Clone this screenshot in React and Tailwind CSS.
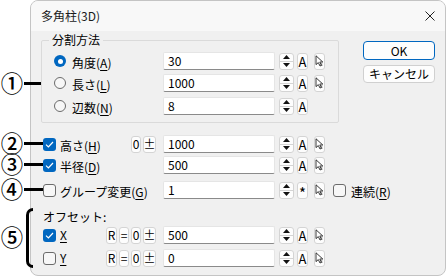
import React from "react"

function Small({ className = "", children }) {
  return (
    <div className={`h-[17px] flex items-center justify-center rounded-[3px] border border-[#d4d4d4] bg-[#fdfdfd] text-[12px] leading-none text-black ${className}`}>
      {children}
    </div>
  )
}

function Field({ value }) {
  return (
    <div className="w-[112px] h-[18px] shrink-0 bg-white border border-[#e5e5e5] border-b-[#8a8a8a] rounded-[2px] pl-[4px] flex items-center text-[12px] text-black">
      {value}
    </div>
  )
}

function Spin() {
  return (
    <div className="ml-[4px] w-[15px] h-[17px] flex flex-col rounded-[3px] border border-[#d4d4d4] bg-[#fdfdfd] overflow-hidden">
      <div className="flex-1 flex items-center justify-center border-b border-[#d4d4d4]">
        <svg width="7" height="4" viewBox="0 0 7 4"><path d="M0 4 L3.5 0 L7 4 Z" fill="#111" /></svg>
      </div>
      <div className="flex-1 flex items-center justify-center">
        <svg width="7" height="4" viewBox="0 0 7 4"><path d="M0 0 L3.5 4 L7 0 Z" fill="#111" /></svg>
      </div>
    </div>
  )
}

function Cursor() {
  return (
    <Small className="ml-[6px] w-[11px]">
      <svg width="9" height="12" viewBox="0 0 9 12">
        <path d="M1 0.8 L1 9.6 L3.3 7.6 L5 11 L6.4 10.3 L4.8 7 L7.8 7 Z" fill="#fff" stroke="#222" strokeWidth="0.9" strokeLinejoin="round" />
        <path d="M5.5 9 h2 M5.5 10.5 h2 M6.5 8.5 v2.5" stroke="#555" strokeWidth="0.6" />
      </svg>
    </Small>
  )
}

function Tools({ a = "A", cursor = true }) {
  return (
    <div className="flex items-center">
      <Spin />
      <Small className={`ml-[3px] w-[11px] ${a === "*" ? "text-[15px] pt-[4px]" : "text-[13px]"}`}>{a}</Small>
      {cursor && <Cursor />}
    </div>
  )
}

function Radio({ on }) {
  return on ? (
    <div className="w-[12px] h-[12px] rounded-full bg-[#0067c0] flex items-center justify-center">
      <div className="w-[5px] h-[5px] rounded-full bg-white" />
    </div>
  ) : (
    <div className="w-[12px] h-[12px] rounded-full border border-[#6b6b6b] bg-[#f7f7f7]" />
  )
}

function Check({ on }) {
  return on ? (
    <div className="w-[13px] h-[13px] shrink-0 rounded-[3px] bg-[#0067c0] flex items-center justify-center">
      <svg width="9" height="7" viewBox="0 0 9 7"><path d="M1 3.6 L3.4 6 L8 1" fill="none" stroke="#fff" strokeWidth="1.2" /></svg>
    </div>
  ) : (
    <div className="w-[13px] h-[13px] shrink-0 rounded-[3px] border border-[#6b6b6b] bg-[#f7f7f7]" />
  )
}

function Label({ text, k }) {
  return (
    <span className="text-[12px] leading-none text-black whitespace-nowrap">
      {text}(<span className="underline underline-offset-2">{k}</span>)
    </span>
  )
}

function Marker({ n, top }) {
  return (
    <div className="absolute left-0 w-[24px] h-[20px] flex items-center justify-center" style={{ top: top - 10 }}>
      <span className="inline-block scale-[1.12] text-[20px] leading-[20px] font-medium text-black">{n}</span>
    </div>
  )
}

export default function App() {
  return (
    <div className="relative w-[447px] h-[277px] bg-white overflow-hidden font-['Noto_Sans_CJK_JP',sans-serif] flex">
      <div className="w-[30px] shrink-0" />
      <div className="w-[416px] h-[276px] flex flex-col rounded-[8px] border border-[#c4c4c4] bg-[#f0f0f0] overflow-hidden">
        <div className="h-[30px] shrink-0 bg-[#f8f8f8] flex items-center justify-between pl-[10px] pr-[10px]">
          <span className="text-[12px] text-[#1b1b1b]">多角柱(3D)</span>
          <svg width="10" height="10" viewBox="0 0 10 10"><path d="M0.5 0.5 L9.5 9.5 M9.5 0.5 L0.5 9.5" stroke="#222" strokeWidth="1" /></svg>
        </div>
        <div className="flex-1 px-[10px] flex flex-col">
          <div className="flex items-start">
            <fieldset className="mt-[1px] w-[298px] h-[91px] border border-[#dadada] rounded-[2px]">
              <legend className="ml-[7px] px-[3px] text-[12px] leading-[16px] text-black">分割方法</legend>
              <div className="mt-[4px] pl-[12px] flex flex-col">
                <div className="h-[18px] flex items-center">
                  <Radio on />
                  <div className="ml-[6px] w-[91px]"><Label text="角度" k="A" /></div>
                  <Field value="30" />
                  <Tools />
                </div>
                <div className="mt-[4px] h-[18px] flex items-center">
                  <Radio />
                  <div className="ml-[6px] w-[91px]"><Label text="長さ" k="L" /></div>
                  <Field value="1000" />
                  <Tools />
                </div>
                <div className="mt-[5px] h-[18px] flex items-center">
                  <Radio />
                  <div className="ml-[6px] w-[91px]"><Label text="辺数" k="N" /></div>
                  <Field value="8" />
                  <Tools cursor={false} />
                </div>
              </div>
            </fieldset>
            <div className="ml-[24px] mt-[10px] w-[72px] flex flex-col">
              <div className="h-[19px] flex items-center justify-center rounded-[4px] border border-[#0067c0] bg-[#fdfdfd] text-[12px] text-black">OK</div>
              <div className="mt-[5px] h-[18px] flex items-center justify-center rounded-[4px] border border-[#d0d0d0] bg-[#fdfdfd] text-[12px] text-black">キャンセル</div>
            </div>
          </div>

          <div className="mt-[12px] h-[18px] flex items-center">
            <div className="w-[122px] flex items-center pl-[2px]">
              <Check on />
              <span className="ml-[4px]"><Label text="高さ" k="H" /></span>
              <div className="ml-auto mr-[7px] flex gap-[2px]">
                <Small className="w-[10px]">0</Small>
                <Small className="w-[13px]">±</Small>
              </div>
            </div>
            <Field value="1000" />
            <Tools />
          </div>
          <div className="mt-[3px] h-[18px] flex items-center">
            <div className="w-[122px] flex items-center pl-[2px]">
              <Check on />
              <span className="ml-[4px]"><Label text="半径" k="D" /></span>
            </div>
            <Field value="500" />
            <Tools />
          </div>
          <div className="mt-[7px] h-[18px] flex items-center">
            <div className="w-[122px] flex items-center pl-[2px]">
              <Check />
              <span className="ml-[4px]"><Label text="グループ変更" k="G" /></span>
            </div>
            <Field value="1" />
            <Tools a="*" />
            <div className="ml-[8px]"><Check /></div>
            <span className="ml-[5px]"><Label text="連続" k="R" /></span>
          </div>

          <div className="mt-[10px] h-[16px] pl-[2px] flex items-center text-[12px] text-black">オフセット:</div>
          <div className="mt-[1px] h-[18px] flex items-center">
            <div className="w-[122px] flex items-center pl-[2px]">
              <Check on />
              <span className="ml-[4px] text-[12px] leading-none underline underline-offset-2">X</span>
              <div className="ml-auto mr-[7px] flex gap-[2px]">
                <Small className="w-[11px]">R</Small>
                <Small className="w-[10px]">=</Small>
                <Small className="w-[10px]">0</Small>
                <Small className="w-[13px]">±</Small>
              </div>
            </div>
            <Field value="500" />
            <Tools />
          </div>
          <div className="mt-[5px] h-[18px] flex items-center">
            <div className="w-[122px] flex items-center pl-[2px]">
              <Check />
              <span className="ml-[4px] text-[12px] leading-none underline underline-offset-2">Y</span>
              <div className="ml-auto mr-[7px] flex gap-[2px]">
                <Small className="w-[11px]">R</Small>
                <Small className="w-[10px]">=</Small>
                <Small className="w-[10px]">0</Small>
                <Small className="w-[13px]">±</Small>
              </div>
            </div>
            <Field value="0" />
            <Tools />
          </div>
        </div>
      </div>

      <Marker n="①" top={83} />
      <div className="absolute left-[24px] top-[82px] w-[17px] h-[3px] bg-black" />
      <Marker n="②" top={143} />
      <div className="absolute left-[24px] top-[142px] w-[19px] h-[3px] bg-black" />
      <Marker n="③" top={164} />
      <div className="absolute left-[24px] top-[163px] w-[19px] h-[3px] bg-black" />
      <Marker n="④" top={189} />
      <div className="absolute left-[24px] top-[188px] w-[19px] h-[3px] bg-black" />
      <Marker n="⑤" top={237} />
      <div className="absolute left-[26px] top-[208px] w-[7px] h-[60px] border-[3px] border-r-0 border-black rounded-l-[7px]" />
    </div>
  )
}
